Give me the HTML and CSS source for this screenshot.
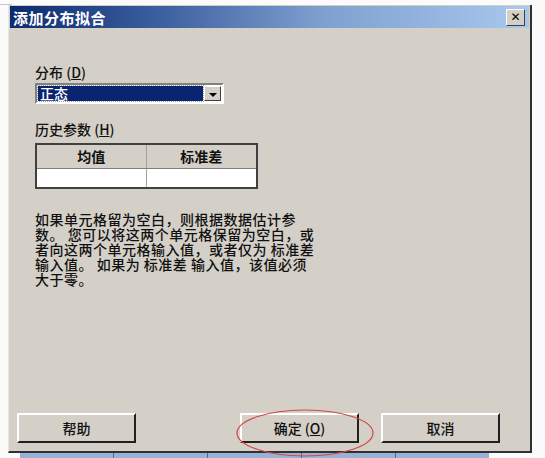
FILE: index.html
```
<!DOCTYPE html>
<html lang="zh-CN">
  <head>
    <meta charset="UTF-8" />
    <meta name="viewport" content="width=device-width, initial-scale=1.0" />
    <title>添加分布拟合</title>
    <link rel="stylesheet" href="styles.css">
  </head>
  <body>
    <div class="topline"></div>
    <div class="dialog">
      <div class="titlebar">
        <span class="title">添加分布拟合</span>
        <button class="close">✕</button>
      </div>

      <div class="content">
        <p class="label">分布 (<u>D</u>)</p>
        <div class="select">
          <span class="selected">正态</span>
          <span class="arrow"></span>
        </div>

        <p class="label hist">历史参数 (<u>H</u>)</p>
        <table class="params">
          <tr><th class="c1">均值</th><th>标准差</th></tr>
          <tr><td class="c1"></td><td></td></tr>
        </table>

        <p class="note">如果单元格留为空白，则根据数据估计参<br>数。 您可以将这两个单元格保留为空白，或<br>者向这两个单元格输入值，或者仅为 标准差<br>输入值。 如果为 标准差 输入值，该值必须<br>大于零。</p>
      </div>

      <div class="buttons">
        <button class="btn">帮助</button>
        <button class="btn ok">确定 (<u>O</u>)</button>
        <button class="btn">取消</button>
      </div>

      <svg class="mark" width="140" height="50" viewBox="0 0 140 50">
        <ellipse cx="70" cy="25" rx="68" ry="23" fill="none" stroke="#d04848" stroke-width="1.2" />
      </svg>
    </div>
    <div class="grid">
      <div class="cell first"></div>
      <div class="cell"></div>
      <div class="cell"></div>
      <div class="cell"></div>
      <div class="cell"></div>
    </div>
  </body>
</html>
```

FILE: styles.css
```
* {
  margin: 0;
  padding: 0;
  box-sizing: border-box;
}
body {
  background-color: #fbfbfb;
  font-family: "Noto Sans CJK SC", "Liberation Sans", sans-serif;
  font-size: 14px;
  font-weight: 500;
  color: #111;
  width: 545px;
  height: 458px;
  overflow: hidden;
}
.topline {
  height: 5px;
  width: 12px;
  border-bottom: 1px solid #c8c8c8;
}
.dialog {
  position: relative;
  margin-left: 8px;
  width: 524px;
  height: 448px;
  background-color: #d4d0c8;
  border-right: 2px solid #303030;
  border-bottom: 2px solid #303030;
  border-left: 1px solid #e8e6e0;
  display: flex;
  flex-direction: column;
}
.titlebar {
  height: 22px;
  margin: 1px 1px 0 1px;
  background: linear-gradient(to right, #0c2a6e 0%, #3a5e9e 28%, #7f9fcf 60%, #a8c8ee 100%);
  display: flex;
  align-items: center;
  justify-content: space-between;
  padding: 0 4px 0 3px;
}
.title {
  color: white;
  font-weight: bold;
  font-size: 15px;
  letter-spacing: 0.5px;
}
.close {
  width: 19px;
  height: 17px;
  background-color: #d4d0c8;
  border: 1px solid;
  border-color: #fff #404040 #404040 #fff;
  font-size: 12px;
  font-weight: bold;
  line-height: 14px;
  color: #000;
  font-family: "DejaVu Sans", sans-serif;
}
.content {
  flex: 1;
  padding: 35px 0 0 26px;
}
.label {
  line-height: 18px;
  height: 18px;
}
.select {
  margin-top: 2px;
  width: 189px;
  height: 21px;
  background-color: white;
  border: 2px solid;
  border-color: #808080 #fff #fff #808080;
  display: flex;
  padding: 1px;
}
.selected {
  flex: 1;
  background-color: #0a2472;
  color: white;
  line-height: 15px;
  padding-left: 2px;
  outline: 1px dotted #9aa;
}
.arrow {
  width: 17px;
  margin-left: 1px;
  background-color: #d4d0c8;
  border: 1px solid;
  border-color: #fff #404040 #404040 #fff;
  position: relative;
}
.arrow::after {
  content: "";
  position: absolute;
  left: 4px;
  top: 6px;
  border-left: 4px solid transparent;
  border-right: 4px solid transparent;
  border-top: 4px solid #000;
}
.hist {
  margin-top: 16px;
}
.params {
  margin-top: 5px;
  width: 223px;
  border-collapse: collapse;
  border: 2px solid #404040;
  background-color: white;
}
.params th {
  height: 24px;
  background-color: #d4d0c8;
  font-weight: bold;
  font-size: 14px;
  border-bottom: 1px solid #808080;
  border-top: 1px solid #fff;
}
.params td {
  height: 20px;
}
.params .c1 {
  width: 110px;
  border-right: 1px solid #a0a0a0;
}
.note {
  margin-top: 23px;
  line-height: 15px;
  font-size: 14px;
  letter-spacing: 0.5px;
}
.buttons {
  display: flex;
  gap: 22px;
  padding: 0 30px 8px 8px;
}
.btn {
  height: 30px;
  width: 119px;
  background-color: #d4d0c8;
  border: 2px solid;
  border-color: #fff #202020 #202020 #fff;
  font-family: "Noto Sans CJK SC", sans-serif;
  font-size: 14px;
  font-weight: 500;
  color: #111;
}
.ok {
  margin-left: auto;
}
.mark {
  position: absolute;
  left: 226px;
  top: 403px;
}
.grid {
  margin-left: 20px;
  display: flex;
  height: 5px;
}
.cell {
  width: 94px;
  height: 5px;
  background-color: #98b2d6;
  border-left: 1px solid #5a6c88;
}
.first {
  width: 93px;
  border-left: none;
}
```
